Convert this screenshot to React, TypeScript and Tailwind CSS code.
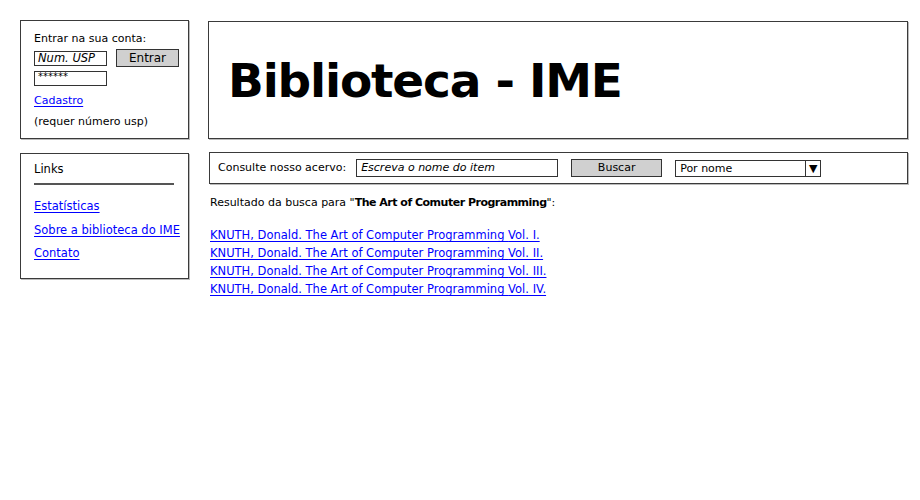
import type { ReactNode } from 'react'

const font = { fontFamily: '"Comic Sans MS", "DejaVu Sans", sans-serif' }

// caixa com borda de rascunho
function Box({ className = '', children }: { className?: string; children?: ReactNode }) {
  return (
    <div className={`border border-[#3a3a3a] bg-white shadow-[1px_1px_0_#bbb] ${className}`}>
      {children}
    </div>
  )
}

function Link({ children, className = '' }: { children: ReactNode; className?: string }) {
  return <a className={`text-[#0000ff] underline underline-offset-2 ${className}`}>{children}</a>
}

const books = ['Vol. I.', 'Vol. II.', 'Vol. III.', 'Vol. IV.']

export default function App() {
  return (
    <div className="w-[920px] h-[500px] bg-white text-black pl-[20px] pt-[20px] flex gap-[19px]" style={font}>
      {/* coluna esquerda */}
      <div className="w-[169px] flex flex-col gap-[14px]">
        <Box className="h-[119px] pl-[13px] pt-[10px] text-[11px] leading-[15px]">
          <p>Entrar na sua conta:</p>
          <div className="flex items-center mt-[3px]">
            <div className="w-[73px] h-[15px] border border-[#333] italic text-[11.5px] leading-[13px] pl-[3px]">Num. USP</div>
            <div className="ml-[9px] w-[63px] h-[18px] border border-[#333] bg-[#d0d0d0] text-center leading-[16px] text-[12px]">Entrar</div>
          </div>
          <div className="w-[73px] h-[15px] border border-[#333] text-[10px] leading-[9px] pl-[3px] mt-[4px]">******</div>
          <Link className="block mt-[7px]">Cadastro</Link>
          <p className="mt-[6px]">(requer número usp)</p>
        </Box>
        <Box className="h-[126px] pl-[13px] pt-[8px] text-[11.5px] leading-[15px]">
          <p>Links</p>
          <div className="w-[140px] h-[2px] bg-[#555] mt-[6px]" />
          <Link className="block mt-[14px]">Estatísticas</Link>
          <Link className="block mt-[9px]">Sobre a biblioteca do IME</Link>
          <Link className="block mt-[8px]">Contato</Link>
        </Box>
      </div>

      {/* coluna direita */}
      <div className="w-[700px] flex flex-col">
        <Box className="h-[118px] mt-[1px] flex items-center pl-[19px]">
          <h1 className="text-[47px] font-bold leading-none tracking-tight">Biblioteca - IME</h1>
        </Box>
        <Box className="h-[32px] ml-[1px] mt-[13px] flex items-center pl-[8px] text-[11px]">
          <span>Consulte nosso acervo:</span>
          <div className="ml-[10px] w-[202px] h-[18px] border border-[#333] italic pl-[4px] leading-[16px]">Escreva o nome do item</div>
          <div className="ml-[13px] w-[91px] h-[18px] border border-[#333] bg-[#d0d0d0] text-center leading-[16px]">Buscar</div>
          <div className="ml-[13px] w-[146px] h-[17px] border border-[#333] flex leading-[15px]">
            <span className="flex-1 pl-[4px]">Por nome</span>
            <span className="w-[15px] border-l border-[#333] flex items-center justify-center text-[11px]">▼</span>
          </div>
        </Box>
        <div className="ml-[2px] mt-[11px] text-[11px] leading-[15px]">
          <p>
            Resultado da busca para "<b className="tracking-[-0.5px]">The Art of Comuter Programming</b>":
          </p>
          <div className="mt-[18px] flex flex-col gap-[3px] text-[11.5px]">
            {books.map((v) => (
              <Link key={v} className="block">KNUTH, Donald. The Art of Computer Programming {v}</Link>
            ))}
          </div>
        </div>
      </div>
    </div>
  )
}
